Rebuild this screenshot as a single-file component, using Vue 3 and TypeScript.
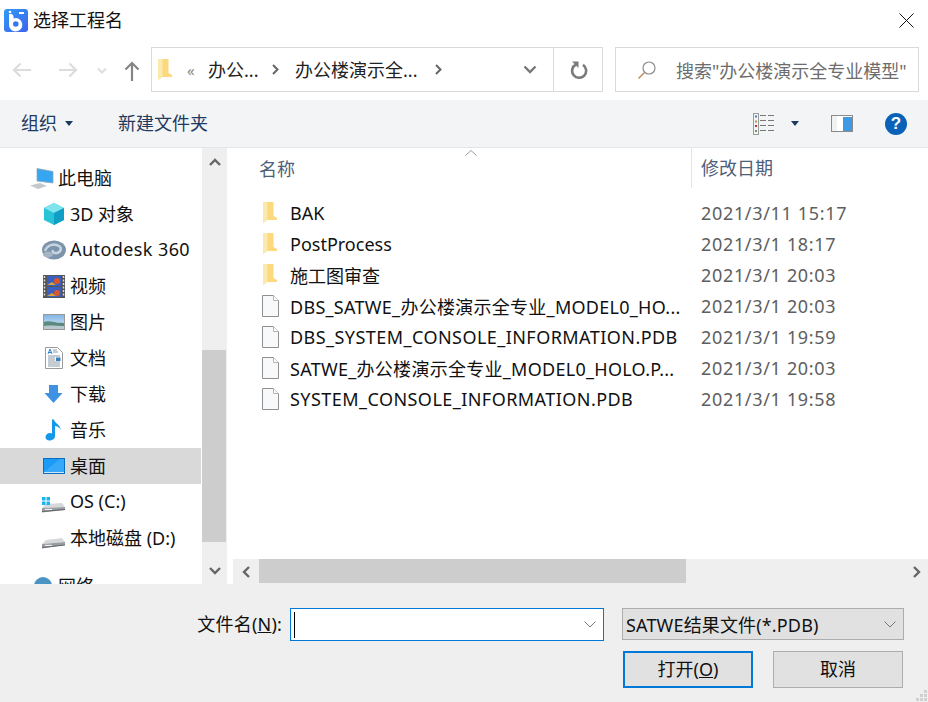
<script setup lang="ts">
interface NavItem { label: string; kind: string; selected?: boolean }
interface FileItem { name: string; date: string; kind: 'folder' | 'file'; caps?: 'all' | 'mixed' }

const navItems: NavItem[] = [
  { label: '3D 对象', kind: 'cube' },
  { label: 'Autodesk 360', kind: 'cloud' },
  { label: '视频', kind: 'film' },
  { label: '图片', kind: 'picture' },
  { label: '文档', kind: 'doc' },
  { label: '下载', kind: 'download' },
  { label: '音乐', kind: 'music' },
  { label: '桌面', kind: 'desktop', selected: true },
  { label: 'OS (C:)', kind: 'osdisk' },
  { label: '本地磁盘 (D:)', kind: 'disk' },
]

const files: FileItem[] = [
  { name: 'BAK', date: '2021/3/11 15:17', kind: 'folder' },
  { name: 'PostProcess', date: '2021/3/1 18:17', kind: 'folder' },
  { name: '施工图审查', date: '2021/3/1 20:03', kind: 'folder' },
  { name: 'DBS_SATWE_办公楼演示全专业_MODEL0_HO...', date: '2021/3/1 20:03', kind: 'file', caps: 'mixed' },
  { name: 'DBS_SYSTEM_CONSOLE_INFORMATION.PDB', date: '2021/3/1 19:59', kind: 'file', caps: 'all' },
  { name: 'SATWE_办公楼演示全专业_MODEL0_HOLO.P...', date: '2021/3/1 20:03', kind: 'file', caps: 'mixed' },
  { name: 'SYSTEM_CONSOLE_INFORMATION.PDB', date: '2021/3/1 19:58', kind: 'file', caps: 'all' },
]
</script>

<template>
  <div class="dialog">
    <header class="titlebar">
      <svg class="logo" width="24" height="23" viewBox="0 0 24 23">
        <defs>
          <linearGradient id="lg" x1="0" y1="0" x2="1" y2="1">
            <stop offset="0" stop-color="#2f9bf5" />
            <stop offset="1" stop-color="#3f62ee" />
          </linearGradient>
        </defs>
        <rect width="24" height="23" rx="3" fill="url(#lg)" />
        <path d="M5 5h3l1.500 2v2.500A6.700 6.700 0 1 1 5 15z" fill="#fff" />
        <circle cx="11.800" cy="15" r="2.800" fill="#3578f0" />
        <circle cx="6" cy="3" r="1.300" fill="#fff" />
        <rect x="15" y="3" width="5" height="2" fill="#fff" />
      </svg>
      <span class="title">选择工程名</span>
      <svg class="close" width="15" height="15" viewBox="0 0 15 15">
        <path d="M.5.500l14 14M14.500.500l-14 14" stroke="#111" stroke-width="1" fill="none" />
      </svg>
    </header>

    <div class="navbar">
      <svg class="nav-back" width="20" height="16" viewBox="0 0 20 16">
        <path d="M19 8H2M8.500 1.500L2 8l6.500 6.500" stroke="#dcdcdc" stroke-width="2.200" fill="none" />
      </svg>
      <svg class="nav-forward" width="20" height="16" viewBox="0 0 20 16">
        <path d="M1 8h17M11.500 1.500L18 8l-6.500 6.500" stroke="#dcdcdc" stroke-width="2.200" fill="none" />
      </svg>
      <svg class="nav-drop" width="10" height="7" viewBox="0 0 10 7">
        <path d="M1 1.500l4 4 4-4" stroke="#dcdcdc" stroke-width="2" fill="none" />
      </svg>
      <svg class="nav-up" width="16" height="20" viewBox="0 0 16 20">
        <path d="M8 20V2M1.500 8.500L8 2l6.500 6.500" stroke="#858585" stroke-width="2.200" fill="none" />
      </svg>
      <div class="address">
        <svg class="addr-folder" width="14" height="21" viewBox="0 0 14 21">
          <path d="M0 0h10.500v14l3.500 2v2H4L0 21z" fill="#fbd97c" />
          <path d="M0 0h4.500v18L0 21z" fill="#fce9ad" />
        </svg>
        <span class="chev-double">«</span>
        <span class="crumb crumb-a">办公...</span>
        <svg class="crumb-sep" width="7" height="11" viewBox="0 0 7 11">
          <path d="M1 1l4.500 4.500L1 10" stroke="#666" stroke-width="2" fill="none" />
        </svg>
        <span class="crumb crumb-b">办公楼演示全...</span>
        <svg class="crumb-sep sep-b" width="7" height="11" viewBox="0 0 7 11">
          <path d="M1 1l4.500 4.500L1 10" stroke="#666" stroke-width="2" fill="none" />
        </svg>
        <svg class="addr-drop" width="14" height="9" viewBox="0 0 14 9">
          <path d="M1.500 1.500L7 7l5.500-5.500" stroke="#777" stroke-width="2.400" fill="none" />
        </svg>
        <div class="refresh">
          <svg width="18" height="18" viewBox="0 0 18 18">
            <path d="M6 3.500A7 7 0 1 0 13 3.900" stroke="#7a7a7a" stroke-width="2.600" fill="none" />
            <path d="M2 .5h6.500V7z" fill="#7a7a7a" />
          </svg>
        </div>
      </div>
      <div class="search">
        <svg width="20" height="20" viewBox="0 0 20 20">
          <circle cx="12" cy="8" r="6" stroke="#8a8a8a" stroke-width="1.200" fill="none" />
          <path d="M7.500 12.500L1.500 18.500" stroke="#c08a5a" stroke-width="1.400" />
        </svg>
        <span>搜索"办公楼演示全专业模型"</span>
      </div>
    </div>

    <div class="toolbar">
      <span class="tool organise">组织</span>
      <svg class="tri" width="8" height="5" viewBox="0 0 8 5"><path d="M0 0h8L4 5z" fill="#1f3a5f" /></svg>
      <span class="tool newfolder">新建文件夹</span>
      <div class="tool-right">
        <svg width="22" height="22" viewBox="0 0 22 22">
          <rect x=".5" y=".5" width="5" height="21" fill="#f3f4f6" stroke="#9a9a9a" />
          <rect x="2" y="2.500" width="2" height="2" fill="#4a7fb5" />
          <rect x="2" y="7.500" width="2" height="2" fill="#b59a4a" />
          <rect x="2" y="12" width="2" height="2" fill="#c03030" />
          <rect x="2" y="17" width="2" height="2" fill="#6a9a5a" />
          <path d="M7 2.500h6M15 2.500h6M7 7.500h6M15 7.500h6M7 12.500h6M15 12.500h6M7 17.500h6M15 17.500h6" stroke="#777" />
        </svg>
        <svg class="tri tri-view" width="8" height="5" viewBox="0 0 8 5"><path d="M0 0h8L4 5z" fill="#1f3a5f" /></svg>
        <svg class="pane" width="22" height="17" viewBox="0 0 22 17">
          <rect x=".5" y=".5" width="21" height="16" fill="#fff" stroke="#8a8a8a" />
          <rect x="1" y="1" width="5" height="15" fill="#f1f1f1" />
          <rect x="12" y="2" width="9" height="14" fill="#3f98e4" />
        </svg>
        <div class="help">?</div>
      </div>
    </div>

    <main class="body">
      <nav class="sidebar">
        <div class="nav-row nav-pc">
          <svg width="24" height="21" viewBox="0 0 24 21">
            <path d="M7 .5l16 3v11.500l-16-2z" fill="#36a6f0" stroke="#8fa6b8" stroke-width=".8" />
            <path d="M0 17.500l10-2.500 7 3-9 3z" fill="#c4c8cc" />
          </svg>
          <span>此电脑</span>
        </div>
        <div v-for="item in navItems" :key="item.label" class="nav-row" :class="{ selected: item.selected }">
          <span class="nav-icon">
            <svg v-if="item.kind === 'cube'" width="22" height="22" viewBox="0 0 22 22">
              <path d="M11 0l10 5v12l-10 5L1 17V5z" fill="#27c4d8" />
              <path d="M11 0l10 5-10 5L1 5z" fill="#7fe4ec" />
              <path d="M11 10l10-5v12l-10 5z" fill="#0f9fc6" />
            </svg>
            <svg v-else-if="item.kind === 'cloud'" width="24" height="20" viewBox="0 0 24 20">
              <ellipse cx="12" cy="10" rx="12" ry="9.500" fill="#7c93ac" />
              <path d="M3 11c2-6 9-8 14-5 3 2 2 6-2 7-3 .5-5-1-4-3" stroke="#c7d3df" stroke-width="2.600" fill="none" />
              <ellipse cx="6" cy="14.500" rx="5" ry="3" fill="#a5b5c5" />
            </svg>
            <svg v-else-if="item.kind === 'film'" width="22" height="23" viewBox="0 0 22 23">
              <rect width="22" height="23" fill="#555" />
              <path d="M1.500 1v21M20.500 1v21" stroke="#ddd" stroke-width="1.400" stroke-dasharray="2 1.500" />
              <rect x="4" y="1" width="14" height="10" fill="#3a5fc0" />
              <rect x="4" y="12" width="14" height="10" fill="#3a5fc0" />
              <circle cx="14" cy="6" r="3" fill="#d9572b" />
              <circle cx="14" cy="18" r="3" fill="#d9572b" />
              <path d="M4 10l5-3 4 3zM4 21l5-3 4 3z" fill="#d8a23a" />
            </svg>
            <svg v-else-if="item.kind === 'picture'" width="22" height="16" viewBox="0 0 22 16">
              <defs>
                <linearGradient id="sky" x1="0" y1="0" x2="0" y2="1">
                  <stop offset="0" stop-color="#7fb4e4" />
                  <stop offset="1" stop-color="#e4eef6" />
                </linearGradient>
              </defs>
              <rect x=".5" y=".5" width="21" height="15" fill="url(#sky)" stroke="#9a9a9a" />
              <path d="M1 8c5-2 10 1 20 1v6H1z" fill="#5d8a80" />
              <path d="M1 12c6-1 12 0 20 0v3H1z" fill="#b8c8cc" />
            </svg>
            <svg v-else-if="item.kind === 'doc'" width="18" height="22" viewBox="0 0 18 22">
              <path d="M.5.500h12l5 5v16H.5z" fill="#fff" stroke="#9a9a9a" />
              <path d="M3 7l2-5 2 5M3.800 5.500h2.400" stroke="#2f7fd0" stroke-width="1" fill="none" />
              <path d="M8 3h4M8 5h5M3 9h12M3 11h7M3 13h7M3 15h12M3 17h12M3 19h12" stroke="#8a98a8" stroke-width="1" />
              <rect x="11" y="10.500" width="4.500" height="3.500" fill="#3a7fb8" />
            </svg>
            <svg v-else-if="item.kind === 'download'" width="19" height="20" viewBox="0 0 19 20">
              <path d="M5 1h9v8h4.500L9.500 19 .5 9H5z" fill="#3f92e2" />
            </svg>
            <svg v-else-if="item.kind === 'music'" width="17" height="22" viewBox="0 0 17 22">
              <path d="M7 .5h2c.5 4 7 5 6.500 11-.2-2.500-2.500-4-5.500-4.500V17c0 3-3 4.500-5.500 4.500S.5 20 .5 18s2-4 4.500-4c.8 0 1.500.2 2 .5z" fill="#1499ea" />
            </svg>
            <svg v-else-if="item.kind === 'desktop'" width="22" height="16" viewBox="0 0 22 16">
              <rect width="22" height="16" fill="#0a6fc0" />
              <rect x="1" y="1" width="20" height="13" fill="#1b9bf5" />
              <path d="M1 14l6-5 10-8h4v13z" fill="#36a9f8" />
              <rect x="1" y="14" width="20" height="1" fill="#c9e6fb" />
            </svg>
            <svg v-else-if="item.kind === 'osdisk'" width="23" height="22" viewBox="0 0 23 22">
              <path d="M0 17l4-4 16-1 3 4z" fill="#d6d8da" />
              <path d="M0 6h3.500v3.500H0zM4.500 6H8v3.500H4.500zM0 10.500h3.500V14H0zM4.500 10.500H8V14H4.500z" fill="#18b4f0" />
              <path d="M0 17l23-1v3L0 21.500z" fill="#9a9da1" />
              <path d="M3 18.500h7" stroke="#f2f2f2" stroke-width="1.200" />
              <path d="M0 20.500l23-2" stroke="#63666a" stroke-width="1" />
            </svg>
            <svg v-else width="23" height="22" viewBox="0 0 23 22">
              <path d="M0 17l4-4 16-2 3 4z" fill="#d6d8da" />
              <path d="M0 17l23-2v3L0 21.500z" fill="#9a9da1" />
              <path d="M3 18.500h7" stroke="#f2f2f2" stroke-width="1.200" />
              <path d="M0 20.500l23-2.500" stroke="#63666a" stroke-width="1" />
            </svg>
          </span>
          <span class="nav-label" :class="{ stretch: item.kind === 'cloud' }">{{ item.label }}</span>
        </div>
        <div class="nav-row nav-net">
          <svg width="22" height="22" viewBox="0 0 22 22">
            <circle cx="13" cy="11" r="9" fill="#4a94c4" />
            <path d="M0 14h8v8H0z" fill="#9ab4c8" />
          </svg>
          <span>网络</span>
        </div>
      </nav>

      <div class="vscroll">
        <svg width="12" height="8" viewBox="0 0 12 8"><path d="M1 7l5-5 5 5" stroke="#666" stroke-width="2.400" fill="none" /></svg>
        <div class="vthumb"></div>
        <svg width="12" height="8" viewBox="0 0 12 8"><path d="M1 1l5 5 5-5" stroke="#666" stroke-width="2.400" fill="none" /></svg>
      </div>

      <section class="content">
        <div class="list-head">
          <span class="col-name">名称</span>
          <svg class="sort" width="12" height="6" viewBox="0 0 12 6"><path d="M.5 5.500L6 .5l5.500 5" stroke="#999" fill="none" /></svg>
          <span class="col-date">修改日期</span>
        </div>
        <div class="list">
          <div v-for="f in files" :key="f.name" class="file-row">
            <span class="file-icon">
              <svg v-if="f.kind === 'folder'" width="14" height="21" viewBox="0 0 14 21">
                <path d="M0 0h10.500v14l3.500 2v2H4L0 21z" fill="#fbd97c" />
                <path d="M0 0h4.500v18L0 21z" fill="#fce9ad" />
              </svg>
              <svg v-else width="17" height="22" viewBox="0 0 17 22">
                <path d="M.5.500h11l5 5v16H.5z" fill="#f8f9fb" stroke="#8f8f8f" />
                <path d="M11.500.500v5h5" fill="#fff" stroke="#b5b5b5" />
              </svg>
            </span>
            <span class="file-name" :class="f.caps">{{ f.name }}</span>
            <span class="file-date">{{ f.date }}</span>
          </div>
        </div>
        <div class="hscroll">
          <svg class="h-left" width="8" height="12" viewBox="0 0 8 12"><path d="M7 1L2 6l5 5" stroke="#666" stroke-width="2.400" fill="none" /></svg>
          <div class="hthumb"></div>
          <svg class="h-right" width="8" height="12" viewBox="0 0 8 12"><path d="M1 1l5 5-5 5" stroke="#666" stroke-width="2.400" fill="none" /></svg>
        </div>
      </section>
    </main>

    <footer class="footer">
      <div class="foot-row">
        <label class="fname-label">文件名(<u>N</u>):</label>
        <div class="fname-input">
          <span class="caret"></span>
          <svg width="12" height="7" viewBox="0 0 12 7"><path d="M.5.500L6 6 11.500.500" stroke="#777" fill="none" /></svg>
        </div>
        <div class="type-select">
          <span>SATWE结果文件(*.PDB)</span>
          <svg width="12" height="7" viewBox="0 0 12 7"><path d="M.5.500L6 6 11.500.500" stroke="#777" fill="none" /></svg>
        </div>
      </div>
      <div class="foot-actions">
        <button class="btn primary">打开(<u>O</u>)</button>
        <button class="btn">取消</button>
      </div>
      <svg class="grip" width="12" height="12" viewBox="0 0 12 12">
        <path d="M8 0h3v3H8zM4 4h3v3H4zM8 4h3v3H8zM0 8h3v3H0zM4 8h3v3H4zM8 8h3v3H8z" fill="#d0d0d0" />
      </svg>
    </footer>
  </div>
</template>

<style scoped>
.dialog {
  position: relative;
  width: 928px;
  height: 702px;
  overflow: hidden;
  display: flex;
  flex-direction: column;
  background: #fff;
  color: #111;
  font-family: "Noto Sans", "Noto Sans CJK SC", sans-serif;
  font-size: 18px;
}
.titlebar {
  height: 40px;
  flex: none;
  display: flex;
  align-items: center;
  padding-left: 4px;
}
.logo { flex: none; }
.title { margin-left: 5px; font-size: 18px; line-height: 40px; }
.close { margin-left: auto; margin-right: 14px; }
.navbar {
  height: 60px;
  flex: none;
  display: flex;
  align-items: flex-start;
  padding-top: 7px;
  box-sizing: border-box;
}
.navbar > svg { flex: none; margin-top: 15px; }
.nav-back { margin-left: 12px; }
.nav-forward { margin-left: 26px; }
.nav-drop { margin-left: 19px; margin-top: 20px !important; }
.nav-up { margin-left: 17px; margin-top: 14px !important; }
.address {
  margin-left: 11px;
  width: 452px;
  height: 45px;
  box-sizing: border-box;
  border: 1px solid #d9d9d9;
  display: flex;
  align-items: center;
  color: #222;
  font-size: 18px;
}
.addr-folder { margin-left: 6px; flex: none; }
.chev-double { margin-left: 15px; color: #888; font-size: 15px; width: 13px; }
.crumb { white-space: nowrap; padding-bottom: 2px; }
.crumb-a { margin-left: 8px; width: 50px; }
.crumb-sep { margin-left: 14px; flex: none; }
.crumb-b { margin-left: 16px; width: 124px; }
.sep-b { margin-left: 16px; }
.addr-drop { margin-left: 81px; flex: none; }
.refresh {
  margin-left: 16px;
  width: 49px;
  height: 100%;
  border-left: 1px solid #d9d9d9;
  display: flex;
  align-items: center;
  justify-content: center;
  box-sizing: border-box;
  padding-left: 2px;
}
.search {
  margin-left: 12px;
  width: 304px;
  height: 45px;
  box-sizing: border-box;
  border: 1px solid #d9d9d9;
  display: flex;
  align-items: center;
  padding-left: 21px;
  color: #6d6d6d;
  font-size: 18px;
  white-space: nowrap;
}
.search span { margin-left: 19px; }
.toolbar {
  height: 48px;
  flex: none;
  box-sizing: border-box;
  background: #f3f4f6;
  border-bottom: 1px solid #e4e5e7;
  display: flex;
  align-items: center;
  color: #1f3a5f;
  padding-left: 21px;
  font-size: 18px;
}
.tool { padding-bottom: 4px; }
.tri { flex: none; margin-left: 8px; }
.newfolder { margin-left: 45px; }
.tool-right { margin-left: auto; display: flex; align-items: center; }
.tri-view { margin-left: 16px; }
.pane { margin-left: 32px; }
.help {
  margin-left: 32px;
  margin-right: 21px;
  width: 22px;
  height: 22px;
  border-radius: 50%;
  background: #0a62b8;
  color: #fff;
  font-family: "Liberation Sans", sans-serif;
  font-weight: 700;
  font-size: 17px;
  line-height: 22px;
  text-align: center;
}
.body {
  height: 436px;
  flex: none;
  display: flex;
  overflow: hidden;
}
.sidebar {
  width: 202px;
  flex: none;
  overflow: hidden;
  padding-top: 12px;
  box-sizing: border-box;
}
.nav-row {
  height: 36px;
  width: 201px;
  display: flex;
  align-items: center;
  padding-left: 41px;
  box-sizing: border-box;
  white-space: nowrap;
}
.nav-row span:not(.nav-icon) { padding-bottom: 2px; }
.nav-icon {
  width: 25px;
  flex: none;
  display: flex;
  justify-content: center;
  margin-right: 4px;
}
.nav-icon svg { display: block; }
.nav-label.stretch { letter-spacing: .42px; }
.nav-row.selected { background: #d9d9d9; }
.nav-pc { padding-left: 30px; }
.nav-pc span { margin-left: 4px; }
.nav-net { padding-left: 30px; margin-top: 12px; }
.nav-net span { margin-left: 6px; }
.vscroll {
  width: 25px;
  flex: none;
  background: #efefef;
  display: flex;
  flex-direction: column;
  align-items: center;
  box-sizing: border-box;
  padding-top: 10px;
}
.vthumb {
  width: 24px;
  align-self: flex-start;
  height: 192px;
  margin-top: 184px;
  margin-bottom: 25px;
  background: #cdcdcd;
}
.content {
  flex: none;
  width: 695px;
  margin-left: 6px;
  display: flex;
  flex-direction: column;
  border-left: 0;
}
.list-head {
  height: 40px;
  flex: none;
  display: flex;
  align-items: center;
  color: #4c607a;
  position: relative;
}
.col-name { margin-left: 26px; }
.sort { position: absolute; left: 232px; top: 2px; }
.col-date {
  position: absolute;
  left: 458px;
  top: 0;
  height: 40px;
  line-height: 40px;
  padding-left: 9px;
  border-left: 1px solid #e5e5e5;
}
.list { flex: 1; padding-top: 9px; }
.file-row {
  height: 31px;
  display: flex;
  align-items: center;
  white-space: nowrap;
}
.file-icon {
  width: 57px;
  flex: none;
  display: flex;
  justify-content: center;
  padding-left: 17px;
  box-sizing: border-box;
  margin-right: 0;
}
.file-icon svg { display: block; }
.file-name { width: 411px; flex: none; overflow: hidden; }
.file-name.all { letter-spacing: .45px; }
.file-name.mixed { letter-spacing: .28px; }
.file-date { color: #5e5e5e; letter-spacing: .67px; }
.hscroll {
  height: 25px;
  flex: none;
  background: #efefef;
  display: flex;
  align-items: center;
  position: relative;
}
.h-left { margin-left: 9px; flex: none; }
.hthumb {
  margin-left: 9px;
  width: 427px;
  height: 24px;
  align-self: flex-start;
  background: #cdcdcd;
}
.h-right { margin-left: auto; margin-right: 7px; flex: none; }
.footer {
  flex: 1;
  position: relative;
  background: #efefef;
  padding-top: 24px;
  box-sizing: border-box;
}
.foot-row { display: flex; align-items: flex-start; }
.fname-label {
  width: 282px;
  text-align: right;
  line-height: 33px;
  flex: none;
  white-space: nowrap;
  letter-spacing: .2px;
}
.fname-input {
  margin-left: 8px;
  width: 314px;
  height: 33px;
  box-sizing: border-box;
  border: 1px solid #0078d7;
  background: #fff;
  display: flex;
  align-items: center;
  justify-content: space-between;
  padding: 0 7px 0 3px;
}
.caret { width: 1px; height: 26px; background: #000; }
.type-select {
  margin-left: 18px;
  width: 282px;
  height: 32px;
  box-sizing: border-box;
  border: 1px solid #adadad;
  background: #e1e1e1;
  display: flex;
  align-items: center;
  justify-content: space-between;
  padding: 0 7px 0 3px;
  white-space: nowrap;
  letter-spacing: .15px;
}
.foot-actions {
  display: flex;
  margin-top: 10px;
  margin-left: 623px;
  gap: 20px;
}
.btn {
  width: 130px;
  height: 37px;
  box-sizing: border-box;
  border: 1px solid #adadad;
  background: #e1e1e1;
  color: #111;
  font: inherit;
  padding: 0 0 4px;
}
.btn.primary { border: 2px solid #0078d7; }
.grip { position: absolute; right: 0; bottom: 0; }
</style>
